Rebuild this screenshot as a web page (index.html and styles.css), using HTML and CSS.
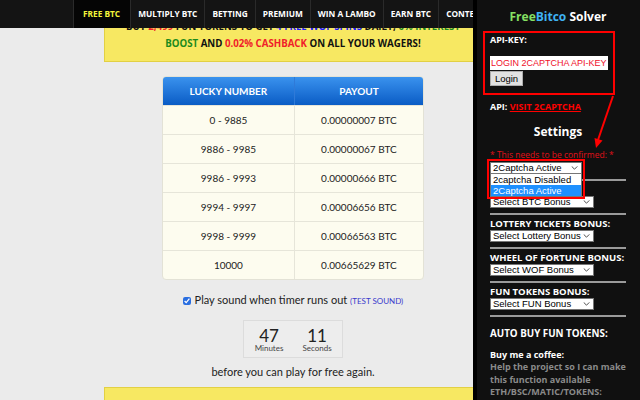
FILE: index.html
```html
<!DOCTYPE html>
<html lang="en">
<head>
  <meta charset="UTF-8" />
  <title>FreeBitco.in - Free BTC</title>
  <meta name="viewport" content="width=device-width, initial-scale=1.0"/>
  <link rel="stylesheet" href="styles.css">
</head>
<body>
  <!-- top menu -->
  <div class="topbar">
    <ul class="nav">
      <li class="active">FREE BTC</li>
      <li>MULTIPLY BTC</li>
      <li>BETTING</li>
      <li>PREMIUM</li>
      <li>WIN A LAMBO</li>
      <li>EARN BTC</li>
      <li>CONTEST</li>
    </ul>
  </div>

  <div class="page">
    <!-- promo banner -->
    <div class="promo">
      <div class="promo-text">
        BUY <span class="red">2,499</span> FUN TOKENS TO GET <span class="blue">4 FREE WOF SPINS</span> DAILY, <span class="green">0% INTEREST</span><br>
        <span class="green">BOOST</span> AND <span class="red">0.02% CASHBACK</span> ON ALL YOUR WAGERS!
      </div>
    </div>

    <!-- payout table -->
    <table class="payout">
      <thead>
        <tr><th>LUCKY NUMBER</th><th>PAYOUT</th></tr>
      </thead>
      <tbody>
        <tr><td>0 - 9885</td><td>0.00000007 BTC</td></tr>
        <tr><td>9886 - 9985</td><td>0.00000067 BTC</td></tr>
        <tr><td>9986 - 9993</td><td>0.00000666 BTC</td></tr>
        <tr><td>9994 - 9997</td><td>0.00006656 BTC</td></tr>
        <tr><td>9998 - 9999</td><td>0.00066563 BTC</td></tr>
        <tr><td>10000</td><td>0.00665629 BTC</td></tr>
      </tbody>
    </table>

    <div class="sound">
      <input type="checkbox" checked> Play sound when timer runs out <a class="test-sound">(TEST SOUND)</a>
    </div>

    <div class="timer">
      <div class="timer-col"><div class="num">47</div><div class="unit">Minutes</div></div>
      <div class="timer-col"><div class="num">11</div><div class="unit">Seconds</div></div>
    </div>

    <div class="again">before you can play for free again.</div>

    <div class="promo promo-bottom"></div>
  </div>

  <!-- solver extension panel -->
  <div class="solver">
    <div class="solver-panel">
      <h1 class="solver-title"><span class="t-free">Free</span><span class="t-bitco">Bitco</span> Solver</h1>

      <div class="api-box">
        <div class="label">API-KEY:</div>
        <input class="api-input" type="text" value="LOGIN 2CAPTCHA API-KEY">
        <button class="login-btn">Login</button>
      </div>

      <div class="api-link"><b>API:</b> <a>VISIT 2CAPTCHA</a></div>

      <h2 class="settings">Settings</h2>

      <div class="field first">
        <div class="confirm">* This needs to be confirmed: *</div>
        <div class="select-wrap short">
          <select><option>2Captcha Active</option></select>
          <svg class="chev" viewBox="0 0 8 5"><path d="M0.5 0.5 L4 4 L7.5 0.5" fill="none" stroke="#222" stroke-width="1"/></svg>
          <div class="options">
            <div>2captcha Disabled</div>
            <div class="hl">2Captcha Active</div>
          </div>
          <div class="mark"></div>
        </div>
      </div>
      <hr>
      <div class="field">
        <div class="label">FREE BTC BONUS:</div>
        <div class="select-wrap">
          <select><option>Select BTC Bonus</option></select>
          <svg class="chev" viewBox="0 0 8 5"><path d="M0.5 0.5 L4 4 L7.5 0.5" fill="none" stroke="#222" stroke-width="1"/></svg>
        </div>
      </div>
      <hr>
      <div class="field">
        <div class="label">LOTTERY TICKETS BONUS:</div>
        <div class="select-wrap">
          <select><option>Select Lottery Bonus</option></select>
          <svg class="chev" viewBox="0 0 8 5"><path d="M0.5 0.5 L4 4 L7.5 0.5" fill="none" stroke="#222" stroke-width="1"/></svg>
        </div>
      </div>
      <hr>
      <div class="field">
        <div class="label">WHEEL OF FORTUNE BONUS:</div>
        <div class="select-wrap">
          <select><option>Select WOF Bonus</option></select>
          <svg class="chev" viewBox="0 0 8 5"><path d="M0.5 0.5 L4 4 L7.5 0.5" fill="none" stroke="#222" stroke-width="1"/></svg>
        </div>
      </div>
      <hr>
      <div class="field">
        <div class="label">FUN TOKENS BONUS:</div>
        <div class="select-wrap">
          <select><option>Select FUN Bonus</option></select>
          <svg class="chev" viewBox="0 0 8 5"><path d="M0.5 0.5 L4 4 L7.5 0.5" fill="none" stroke="#222" stroke-width="1"/></svg>
        </div>
      </div>
      <hr>

      <h3 class="auto-buy">AUTO BUY FUN TOKENS:</h3>
      <div class="coffee">Buy me a coffee:</div>
      <div class="help">Help the project so I can make this function available ETH/BSC/MATIC/TOKENS:</div>
      <div class="wallet">0x4A5089d9508243d04300fbd8ac84Ac9358F3e55</div>
    </div>

    <!-- red annotation arrow -->
    <svg class="arrow" viewBox="0 0 167 400">
      <line x1="140" y1="96" x2="125" y2="140" stroke="#f00" stroke-width="2"/>
      <polygon points="123,148 129.5,140.5 121.5,138" fill="#f00"/>
    </svg>
  </div>
</body>
</html>
```

FILE: styles.css
```css
body {
  margin: 0;
  background: #ebebeb;
  font-family: Lato, "Open Sans", Arial, sans-serif;
  color: #333;
  height: 400px;
  overflow: hidden;
}

/* ======================
   top menu
   ====================== */
.topbar {
  background: #141414;
  height: 28px;
  overflow: hidden;
}
.nav {
  list-style: none;
  margin: 0;
  padding: 0 0 0 73px;
  display: flex;
  height: 28px;
}
.nav li {
  border-left: 1px solid #2a2a2a;
  padding: 0 7px;
  line-height: 28px;
  color: #fff;
  font-family: "Open Sans", Arial, sans-serif;
  font-weight: bold;
  font-size: 8.3px;
  white-space: nowrap;
}
.nav li.active {
  padding: 0 10px 0 9px;
  background: #050505;
  color: #f4f43a;
}

/* ======================
   page
   ====================== */
.page {
  width: 586px;
  text-align: center;
}
.promo {
  margin: 0 104px;
  height: 33px;
  overflow: hidden;
  background: #f7e862;
  border: 1px solid #e2d044;
  border-top: none;
}
.promo-text {
  margin-top: -10px;
  font-family: "Open Sans", Arial, sans-serif;
  font-weight: bold;
  font-size: 9.7px;
  line-height: 17px;
  color: #111;
}
.red { color: #f0202a; }
.blue { color: #1a1aff; }
.green { color: #1c8a1c; }

.payout {
  width: 262px;
  margin: 14px auto 0;
  border-collapse: separate;
  border-spacing: 0;
  border: 1px solid #e3e2d6;
  border-radius: 4px;
  overflow: hidden;
  background: #fdfcef;
}
.payout th {
  height: 28px;
  padding: 0;
  background: linear-gradient(#3a92ee, #0a5cc5);
  color: #fff;
  font-size: 10px;
  font-weight: bold;
}
.payout th + th {
  border-left: 1px solid #2f7ad8;
}
.payout td {
  height: 28px;
  padding: 0;
  border-top: 1px solid #e6e5d9;
  font-size: 10px;
  color: #222;
}
.payout td + td {
  border-left: 1px solid #e6e5d9;
}

.sound {
  margin-top: 13px;
  font-size: 11px;
  line-height: 14px;
  color: #222;
}
.sound input {
  width: 8px;
  height: 8px;
  margin: 0 1px 0 0;
  vertical-align: -1px;
  accent-color: #2a6ee0;
}
.test-sound {
  color: #3a3acc;
  font-size: 8px;
}

.timer {
  display: inline-flex;
  margin-top: 12px;
  padding: 7px 1px 5px 1px;
  width: 100px;
  box-sizing: border-box;
  border: 1px solid #dcdcdc;
  background: #ededed;
}
.timer-col {
  width: 48px;
}
.timer .num {
  font-size: 17px;
  line-height: 16px;
  color: #222;
}
.timer .unit {
  font-size: 8px;
  line-height: 8px;
  color: #444;
}

.again {
  margin-top: 7px;
  font-size: 11px;
  line-height: 14px;
  color: #222;
}

.promo-bottom {
  margin-top: 8px;
  height: 14px;
  border-top: 1px solid #e2d044;
}

/* ======================
   solver panel (overlay)
   ====================== */
.solver {
  position: fixed;
  top: 0;
  right: 0;
  width: 167px;
  height: 400px;
  overflow: hidden;
  background: #000;
  font-family: "Open Sans", Arial, sans-serif;
  color: #fff;
}
.solver-panel {
  margin-left: 4px;
  height: 100%;
  padding: 0 14px 0 13px;
  background: #101010;
}
.solver-title {
  margin: 0;
  padding-top: 3px;
  height: 28px;
  line-height: 28px;
  font-size: 12px;
  text-align: center;
}
.t-free { color: #86e063; }
.t-bitco { color: #3fb2f2; }

.api-box {
  margin-left: -7px;
  width: 132px;
  box-sizing: border-box;
  border: 2px solid #f00;
  padding: 1px 5px 7px;
}
.label {
  font-size: 9.5px;
  font-weight: bold;
  line-height: 12px;
  white-space: nowrap;
}
.api-box .label {
  font-size: 9px;
}
.api-input {
  display: block;
  margin-top: 10px;
  width: 118px;
  height: 14px;
  box-sizing: border-box;
  padding: 0 1px;
  border: none;
  background: #fff;
  color: #f0102a;
  font-family: Arial, sans-serif;
  font-size: 9px;
}
.login-btn {
  display: block;
  margin-top: 1px;
  width: 33px;
  height: 15px;
  padding: 0;
  border: 1px solid #adadad;
  background: #e1e1e1;
  color: #000;
  font-family: Arial, sans-serif;
  font-size: 9.5px;
}

.api-link {
  margin-top: 6px;
  font-size: 9px;
  line-height: 12px;
}
.api-link a {
  color: #f00;
  font-weight: bold;
  text-decoration: underline;
}

.settings {
  margin: 9px 0 7px;
  font-size: 12px;
  line-height: 20px;
  text-align: center;
}
.confirm {
  color: #e0101a;
  font-size: 8.5px;
  line-height: 12px;
  margin-bottom: 1px;
  white-space: nowrap;
}

.field {
  padding: 3px 0 5px;
}
.field.first {
  padding-top: 0;
}
.select-wrap {
  position: relative;
  width: 104px;
  height: 12px;
}
.select-wrap.short {
  width: 92px;
}
.select-wrap select {
  appearance: none;
  display: block;
  width: 100%;
  height: 12px;
  margin: 0;
  padding: 0 0 0 2px;
  border: 1px solid #767676;
  border-radius: 0;
  background: #fff;
  color: #000;
  font-family: Arial, sans-serif;
  font-size: 9.5px;
  line-height: 10px;
}
.chev {
  position: absolute;
  right: 4px;
  top: 4px;
  width: 7px;
  height: 4px;
}
.options {
  position: absolute;
  top: 12px;
  left: 0;
  width: 92px;
  box-sizing: border-box;
  border: 1px solid #767676;
  border-top: none;
  background: #fff;
  color: #000;
  font-family: Arial, sans-serif;
  font-size: 9.5px;
  line-height: 11px;
  z-index: 2;
}
.options div {
  padding-left: 2px;
}
.options .hl {
  background: #1e90ff;
  color: #fff;
}
.mark {
  position: absolute;
  top: -3px;
  left: -3px;
  width: 98px;
  height: 40px;
  box-sizing: border-box;
  border: 2px solid #f00;
  z-index: 3;
}

.solver hr {
  margin: 0;
  border: none;
  border-top: 2px solid #9a9a9a;
}

.auto-buy {
  margin: 10px 0 0;
  font-size: 9.8px;
  line-height: 14px;
  white-space: nowrap;
}
.coffee {
  margin-top: 8px;
  font-size: 9px;
  font-weight: bold;
  line-height: 12px;
}
.help {
  font-size: 9px;
  font-weight: bold;
  line-height: 12.5px;
  color: #8a8a8a;
}
.wallet {
  margin-top: 1px;
  font-size: 6px;
  color: #1aa3e8;
  white-space: nowrap;
  overflow: hidden;
}

.arrow {
  position: absolute;
  top: 0;
  left: 0;
  width: 167px;
  height: 400px;
  pointer-events: none;
}
```
